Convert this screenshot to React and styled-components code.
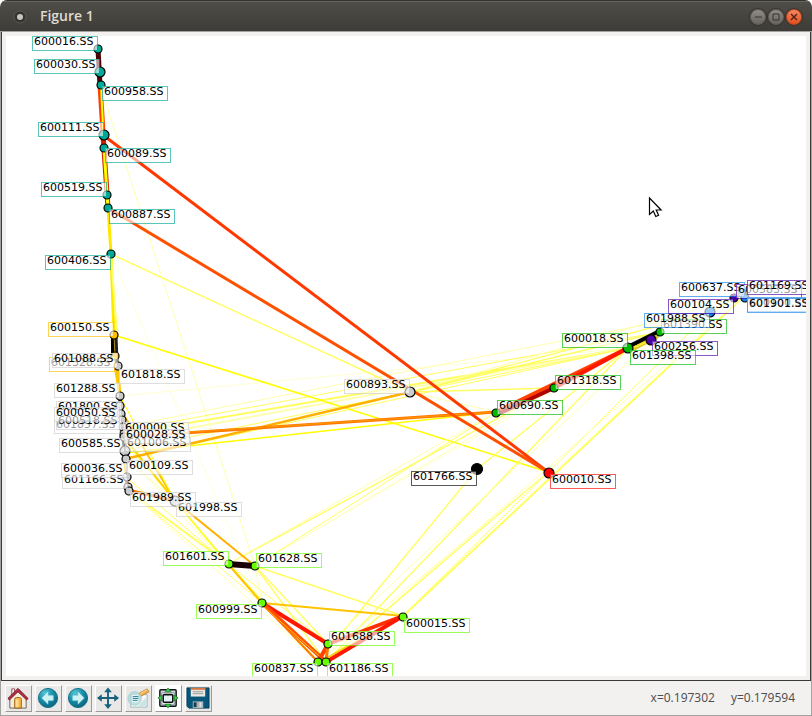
import React from "react";
import styled, { createGlobalStyle } from "styled-components";

const GlobalStyle = createGlobalStyle`
  * { box-sizing: border-box; }
  body { margin: 0; background: #ffffff; }
`;

const Window = styled.main`
  display: flex;
  flex-direction: column;
  width: 100%;
  border-radius: 7px 7px 0 0;
  overflow: hidden;
  background: #f2f1f0;
  border-bottom: 1px solid #a3a2a0;
  font-family: "Open Sans", "Noto Sans", sans-serif;
`;

const TitleBar = styled.header`
  display: flex;
  align-items: center;
  height: 32px;
  padding: 0 10px 0 12px;
  background: linear-gradient(#504e48, #3c3b37);
  border-top: 1px solid #33322e;
  box-shadow: inset 0 1px 0 #66645d;
`;

const TitleIcon = styled.svg`
  width: 16px;
  height: 16px;
  margin-right: 12px;
`;

const Title = styled.h1`
  flex: 1;
  margin: 0;
  padding-bottom: 2px;
  color: #dfdbd2;
  font-size: 14px;
  line-height: 20px;
  font-weight: 600;
`;

const WindowButtons = styled.div`
  display: flex;
  gap: 2px;
`;

const WindowButton = styled.button`
  width: 16px;
  height: 16px;
  padding: 0;
  border: 1px solid ${(p) => (p.$close ? "#c0441d" : "#5f5d56")};
  border-radius: 50%;
  background: ${(p) =>
    p.$close
      ? "linear-gradient(#f58662, #e2501f)"
      : "linear-gradient(#8e8c84, #66645d)"};
  box-shadow: 0 0 1px 1px #35342f;

  svg {
    display: block;
    width: 14px;
    height: 14px;
  }
`;

const CanvasFrame = styled.section`
  padding: 4px;
  margin: 0 1px;
  border: 1px solid #3c3b37;
  border-top: 0;
  outline: 1px solid #a3a2a0;
`;

const Plot = styled.svg`
  display: block;
  width: 100%;
  height: auto;
  background: #ffffff;
`;

const LabelText = styled.text`
  font-family: "DejaVu Sans", sans-serif;
  font-size: 11px;
  fill: #000000;
`;

const Toolbar = styled.footer`
  position: relative;
  display: flex;
  align-items: center;
  gap: 3px;
  height: 34px;
  padding: 0 16px 0 4px;
  background: #f2f1f0;
  border-left: 1px solid #a3a2a0;
  border-right: 1px solid #a3a2a0;
`;

const ToolButton = styled.button`
  width: 27px;
  height: 27px;
  padding: 0;
  border: 1px solid;
  border-color: #ffffff #9c9b99 #9c9b99 #ffffff;
  background: ${(p) => (p.$light ? "#ffffff" : "#e9e8e7")};

  svg {
    display: block;
    width: 24px;
    height: 24px;
  }
`;

const Coordinates = styled.output`
  display: flex;
  gap: 16px;
  margin-left: auto;
  color: #4c4c4c;
  font-size: 12px;
  line-height: 16px;
`;

const TEAL = "#00a896";
const GRAY = "#cccccc";
const GOLD = "#ffbf00";
const GREEN = "#00b800";
const LIME = "#66ff00";
const PURPLE = "#4b00a8";
const BLUE = "#1080e8";
const RED = "#ff0000";
const BLACK = "#000000";

const PALE = "#ffffb0";
const LEMON = "#ffff60";
const YELLOW = "#ffff00";
const AMBER = "#ffc400";
const ORANGE = "#ff7800";
const FLAME = "#ff4000";
const SCARLET = "#ff1800";

// [x1, y1, x2, y2, colour, width]
const edges = [
  [100, 85, 255, 566, PALE, 1],
  [111, 254, 262, 603, "#ffffd8", 1],
  [120, 396, 628, 348, "#ffffd0", 1],
  [122, 431, 660, 332, LEMON, 1],
  [122, 427, 710, 312, PALE, 1],
  [124, 434, 628, 348, LEMON, 2],
  [124, 440, 628, 348, PALE, 2],
  [126, 450, 628, 348, LEMON, 1],
  [125, 459, 628, 348, LEMON, 1],
  [410, 392, 710, 312, LEMON, 1.4],
  [410, 392, 734, 298, PALE, 1],
  [410, 392, 660, 332, LEMON, 1.4],
  [410, 392, 554, 388, LEMON, 1.4],
  [410, 392, 496, 412, PALE, 1],
  [111, 254, 410, 392, LEMON, 1.4],
  [114, 335, 548, 472, YELLOW, 1.6],
  [125, 453, 496, 412, YELLOW, 1.4],
  [477, 469, 628, 348, LEMON, 1.4],
  [477, 469, 318, 662, LEMON, 1.4],
  [628, 348, 326, 662, LEMON, 1.4],
  [628, 348, 228, 564, LEMON, 1.4],
  [496, 412, 255, 566, LEMON, 1],
  [554, 388, 255, 566, PALE, 1],
  [496, 412, 228, 564, PALE, 1],
  [742, 298, 403, 616, LEMON, 2],
  [710, 312, 403, 616, LEMON, 1],
  [742, 298, 326, 662, PALE, 1],
  [660, 332, 328, 644, PALE, 1],
  [548, 472, 326, 662, LEMON, 1.4],
  [548, 472, 318, 662, PALE, 1],
  [628, 348, 255, 566, "#ffffd0", 1],
  [128, 490, 228, 564, LEMON, 2],
  [126, 477, 228, 564, LEMON, 1],
  [128, 490, 262, 603, LEMON, 1],
  [124, 440, 228, 564, LEMON, 2],
  [125, 453, 262, 603, PALE, 1],
  [125, 459, 255, 566, PALE, 1],
  [128, 490, 318, 662, PALE, 1],
  [124, 440, 262, 603, LEMON, 1],
  [175, 501, 228, 564, YELLOW, 1],
  [255, 566, 403, 616, LEMON, 1.4],
  [255, 566, 328, 644, LEMON, 1.4],
  [255, 566, 326, 662, LEMON, 1.4],
  [255, 566, 262, 603, PALE, 1],
  [228, 564, 328, 644, LEMON, 1],
  [228, 564, 318, 662, LEMON, 2],
  [228, 564, 262, 603, AMBER, 2],
  [262, 603, 403, 616, AMBER, 2],
  [403, 616, 318, 662, AMBER, 1],
  [100, 85, 104, 148, FLAME, 5],
  [101, 85, 104, 148, YELLOW, 2],
  [103, 135, 108, 208, "#d82000", 5],
  [104, 148, 108, 208, YELLOW, 3],
  [108, 208, 111, 254, "#ffe800", 3],
  [111, 254, 114, 335, "#ffe800", 3],
  [111, 254, 117, 335, LEMON, 2],
  [115, 365, 120, 396, AMBER, 3],
  [114, 335, 122, 420, "#ffe800", 3],
  [117, 366, 120, 396, AMBER, 3],
  [123, 451, 126, 478, AMBER, 2],
  [120, 396, 125, 453, BLACK, 4],
  [121, 410, 175, 501, AMBER, 2],
  [124, 437, 175, 501, "#ffd000", 2],
  [120, 396, 175, 501, YELLOW, 1],
  [175, 501, 255, 566, "#ffb000", 2],
  [128, 490, 175, 501, ORANGE, 3],
  [126, 477, 128, 490, FLAME, 3],
  [125, 459, 410, 392, "#ffb000", 2.4],
  [124, 437, 496, 412, ORANGE, 3],
  [175, 433, 496, 412, "#ff9800", 1],
  [103, 135, 548, 472, "#ff3800", 3],
  [108, 208, 548, 472, "#ff5000", 3],
  [98, 49, 100, 85, "#4d0006", 5],
  [113, 335, 113, 356, BLACK, 4],
  [116, 335, 117, 362, "#202020", 3],
  [114, 335, 115, 356, "#b09020", 1],
  [496, 412, 628, 348, FLAME, 4],
  [498, 414, 554, 388, "#b00000", 4],
  [554, 388, 628, 348, SCARLET, 4],
  [628, 348, 660, 332, BLACK, 6],
  [631, 350, 658, 336, "#d8c830", 4],
  [630, 349, 651, 340, "#ffe830", 2],
  [710, 312, 734, 298, LEMON, 2],
  [228, 564, 255, 566, "#180000", 6],
  [262, 603, 328, 644, SCARLET, 4],
  [262, 603, 318, 662, ORANGE, 2],
  [262, 603, 326, 662, "#ff5000", 4],
  [263, 606, 326, 662, AMBER, 1],
  [328, 644, 318, 662, FLAME, 4],
  [328, 644, 326, 662, ORANGE, 3],
  [328, 644, 403, 616, "#ff3000", 4],
  [403, 616, 326, 662, SCARLET, 4],
  [374, 631, 326, 659, AMBER, 1],
];

// [x, y, colour, radius]
const nodes = [
  [98, 49, TEAL, 4],
  [100, 72, TEAL, 5],
  [101, 85, TEAL, 4],
  [104, 135, TEAL, 5],
  [104, 148, TEAL, 4],
  [107, 195, TEAL, 4],
  [108, 208, TEAL, 4],
  [111, 254, TEAL, 4],
  [114, 335, GOLD, 4],
  [115, 356, GOLD, 4],
  [118, 366, GRAY, 4],
  [120, 396, GRAY, 4],
  [120, 406, GRAY, 4],
  [121, 414, GRAY, 4],
  [122, 420, GRAY, 4],
  [123, 427, GRAY, 4],
  [124, 434, GRAY, 4],
  [124, 437, GRAY, 4],
  [125, 451, GRAY, 5],
  [126, 459, GRAY, 4],
  [127, 477, GRAY, 4],
  [128, 487, GRAY, 4],
  [129, 491, GRAY, 4],
  [175, 501, GRAY, 5],
  [410, 392, GRAY, 5],
  [477, 469, BLACK, 5.5],
  [549, 473, RED, 5],
  [496, 413, GREEN, 4],
  [554, 388, GREEN, 4],
  [628, 348, GREEN, 5],
  [660, 332, GREEN, 4],
  [651, 340, PURPLE, 5],
  [710, 312, BLUE, 5],
  [734, 298, PURPLE, 4],
  [742, 293, BLUE, 4],
  [745, 298, BLUE, 4],
  [229, 564, LIME, 4],
  [255, 566, LIME, 4],
  [262, 603, LIME, 4],
  [328, 644, LIME, 4],
  [403, 617, LIME, 4],
  [318, 662, LIME, 4],
  [326, 662, LIME, 4],
];

// [ticker, x, y, border colour]
const labels = [
  ["600016.SS", 32, 36, TEAL],
  ["600030.SS", 34, 59, TEAL],
  ["600958.SS", 102, 86, TEAL],
  ["600111.SS", 38, 122, TEAL],
  ["600089.SS", 105, 148, TEAL],
  ["600519.SS", 41, 182, TEAL],
  ["600887.SS", 109, 209, TEAL],
  ["600406.SS", 45, 255, TEAL],
  ["601328.SS", 49, 357, GOLD],
  ["600150.SS", 48, 322, GOLD],
  ["601088.SS", 52, 353, GRAY],
  ["601818.SS", 119, 369, GRAY],
  ["601288.SS", 54, 383, GRAY],
  ["601857.SS", 54, 419, GRAY],
  ["600518.SS", 56, 415, GRAY],
  ["601800.SS", 56, 401, GRAY],
  ["600050.SS", 54, 407, GRAY],
  ["600585.SS", 59, 438, GRAY],
  ["601006.SS", 125, 437, GRAY],
  ["600000.SS", 123, 422, GRAY],
  ["600028.SS", 124, 429, GRAY],
  ["600109.SS", 127, 460, GRAY],
  ["601166.SS", 62, 474, GRAY],
  ["600036.SS", 61, 463, GRAY],
  ["601998.SS", 176, 502, GRAY],
  ["601989.SS", 130, 492, GRAY],
  ["600893.SS", 344, 379, GRAY],
  ["601766.SS", 411, 471, BLACK],
  ["600010.SS", 550, 474, RED],
  ["600690.SS", 497, 400, GREEN],
  ["601318.SS", 555, 375, GREEN],
  ["600018.SS", 562, 333, GREEN],
  ["600256.SS", 652, 341, PURPLE],
  ["601390.SS", 661, 319, GREEN],
  ["601398.SS", 630, 350, GREEN],
  ["601988.SS", 644, 313, BLUE],
  ["600637.SS", 679, 282, BLUE],
  ["600104.SS", 668, 299, PURPLE],
  ["600583.SS", 736, 284, PURPLE],
  ["601169.SS", 747, 280, PURPLE],
  ["600100.SS", 747, 297, BLUE],
  ["601901.SS", 747, 298, BLUE],
  ["601601.SS", 163, 551, LIME],
  ["601628.SS", 256, 553, LIME],
  ["600999.SS", 196, 604, LIME],
  ["601688.SS", 329, 631, LIME],
  ["600015.SS", 404, 618, LIME],
  ["600837.SS", 252, 663, LIME],
  ["601186.SS", 327, 663, LIME],
];

function Ticker({ label: [name, x, y, color] }) {
  return (
    <g>
      <rect
        x={x}
        y={y}
        width="65"
        height="14"
        fill="#ffffff"
        fillOpacity="0.6"
        stroke={color}
        strokeOpacity="0.65"
        shapeRendering="crispEdges"
      />
      <LabelText x={x + 2} y={y + 9}>{name}</LabelText>
    </g>
  );
}

function Graph() {
  return (
    <Plot viewBox="6 36 800 640" role="img" aria-label="Stock correlation graph">
      {edges.map(([x1, y1, x2, y2, color, width], i) => (
        <line key={i} x1={x1} y1={y1} x2={x2} y2={y2} stroke={color} strokeWidth={width} />
      ))}
      {nodes.map(([x, y, color, r], i) => (
        <circle key={i} cx={x} cy={y} r={r} fill={color} stroke="#000" strokeWidth="1.2" />
      ))}
      {labels.map((label) => (
        <Ticker key={label[0]} label={label} />
      ))}
      <path
        d="M649.5 198v16.5l3.8-3.5 2.5 5.5 2.8-1.3-2.4-5.2h4.9z"
        fill="#fff"
        stroke="#000"
        strokeWidth="1.2"
      />
    </Plot>
  );
}

const HomeIcon = () => (
  <svg viewBox="0 0 25 25" aria-hidden="true">
    <path d="M6 3h3v7H6z" fill="#f7efe5" stroke="#9a5060" />
    <path d="M4 12v11h17V12l-8-8z" fill="#f4eddc" stroke="#716253" />
    <path d="M9 23v-9q0-2 2-2h3q2 0 2 2v9z" fill="#f7b64c" stroke="#9c651c" />
    <path d="M10 14h3v8h-3z" fill="#ffdc91" />
    <path d="M2 13 12.5 2.500 23 13l-1.500 1.500-9-8.500-9 8.500z" fill="#b82c45" stroke="#741c2b" />
  </svg>
);

const ArrowIcon = ({ forward }) => (
  <svg viewBox="0 0 25 25" aria-hidden="true">
    <defs>
      <radialGradient id={forward ? "orbR" : "orbL"} cx="0.35" cy="0.25" r="0.85">
        <stop offset="0" stopColor="#55c5d6" />
        <stop offset="0.5" stopColor="#168ca6" />
        <stop offset="1" stopColor="#075d79" />
      </radialGradient>
    </defs>
    <circle cx="12.500" cy="12.500" r="10" fill={`url(#${forward ? "orbR" : "orbL"})`} stroke="#177087" />
    <path
      d={forward ? "M19 12.500 12.500 6v4H7v5h5.500v4z" : "M6 12.500 12.500 6v4H18v5h-5.500v4z"}
      fill="#cef2f4"
      stroke="#a1dbe3"
      strokeWidth="0.5"
    />
  </svg>
);

const MoveIcon = () => (
  <svg viewBox="0 0 25 25" aria-hidden="true">
    <path
      d="M12.500 1.500l4 5h-3v5h5.500v-3l5 4-5 4v-3h-5.500v5.500h3l-4 5-4-5h3v-5.500H6v3l-5-4 5-4v3h5.500v-5h-3z"
      fill="#17617f"
    />
  </svg>
);

const ZoomIcon = () => (
  <svg viewBox="0 0 25 25" aria-hidden="true">
    <path d="M5 9h17v13H5z" fill="#f9fbfa" stroke="#98b9c0" />
    <path d="m21 12-9 9h9z" fill="#cbe5e5" />
    <path d="M13 8 22 3l2 3-9 5z" fill="#f3af4b" stroke="#cc8630" />
    <path d="m15 8 7-4" stroke="#ffe19b" />
    <circle cx="9" cy="13" r="7" fill="#a8d8d8" fillOpacity="0.75" stroke="#aaced0" />
    <path d="M6 9h7v8H6z" fill="#e2f3f3" />
    <path d="M7 11h6M7 13h6M7 15h5" stroke="#347994" />
  </svg>
);

const SubplotsIcon = () => (
  <svg viewBox="0 0 25 25" aria-hidden="true">
    <rect x="4" y="4" width="17" height="17" rx="1" fill="#ccd8e4" stroke="#111" strokeWidth="1.5" />
    <rect x="6" y="7" width="13" height="12" fill="#fff" stroke="#8a949c" />
    <rect x="7.500" y="9" width="10" height="8" rx="1" fill="#e6f0f8" stroke="#111" strokeWidth="1.600" />
    <path
      d="m12.500 2 3 4h-6zM12.500 23l3-4h-6zM2 12.500l4-3v6zM23 12.500l-4-3v6z"
      fill="#3bd34b"
      stroke="#126f22"
      strokeWidth="0.7"
    />
  </svg>
);

const SaveIcon = () => (
  <svg viewBox="0 0 25 25" aria-hidden="true">
    <path d="M1 2h23v21H3l-2-2z" fill="#07577b" stroke="#083f5b" />
    <path d="M5 2h15v9H5z" fill="#e9e9e5" />
    <path d="M5 2h15v2H5z" fill="#d87845" />
    <path d="M7 6h11M7 8h11" stroke="#999" />
    <path d="M7 16h11v7H7z" fill="#aab4b7" />
    <path d="M8 17h3v5H8z" fill="#173d51" />
    <path d="M14 17h2v5h-2z" fill="#e0e3e3" />
  </svg>
);

const tools = [
  { name: "Home", icon: <HomeIcon /> },
  { name: "Back", icon: <ArrowIcon /> },
  { name: "Forward", icon: <ArrowIcon forward /> },
  { name: "Pan", icon: <MoveIcon /> },
  { name: "Zoom", icon: <ZoomIcon /> },
  { name: "Configure subplots", icon: <SubplotsIcon />, light: true },
  { name: "Save", icon: <SaveIcon /> },
];

export default function App() {
  return (
    <>
      <GlobalStyle />
      <Window>
        <TitleBar>
          <TitleIcon viewBox="0 0 16 16" aria-hidden="true">
            <circle cx="8" cy="8" r="6" fill="#34332f" stroke="#5b5952" />
            <circle cx="8" cy="8" r="3" fill="#c8c5bd" />
          </TitleIcon>
          <Title>Figure 1</Title>
          <WindowButtons>
            <WindowButton aria-label="Minimize">
              <svg viewBox="0 0 14 14"><path d="M4 7h7" stroke="#35342f" /></svg>
            </WindowButton>
            <WindowButton aria-label="Maximize">
              <svg viewBox="0 0 14 14"><path d="M4 4h6v6H4z" fill="none" stroke="#35342f" /></svg>
            </WindowButton>
            <WindowButton aria-label="Close" $close>
              <svg viewBox="0 0 14 14"><path d="m4 4 6 6m0-6-6 6" stroke="#4a2015" strokeWidth="1.300" /></svg>
            </WindowButton>
          </WindowButtons>
        </TitleBar>
        <CanvasFrame>
          <Graph />
        </CanvasFrame>
        <Toolbar>
          {tools.map(({ name, icon, light }) => (
            <ToolButton key={name} aria-label={name} title={name} $light={light}>
              {icon}
            </ToolButton>
          ))}
          <Coordinates>
            <span>x=0.197302</span>
            <span>y=0.179594</span>
          </Coordinates>
        </Toolbar>
      </Window>
    </>
  );
}
